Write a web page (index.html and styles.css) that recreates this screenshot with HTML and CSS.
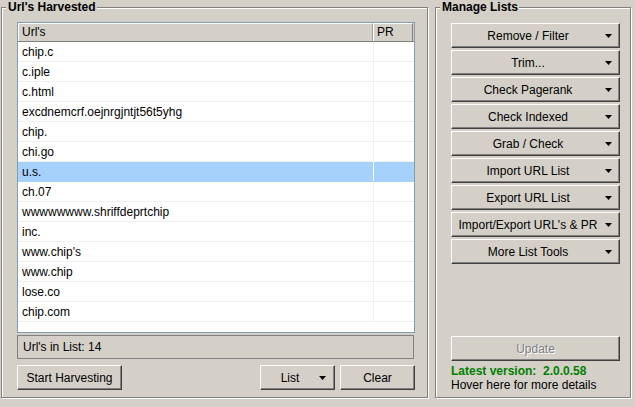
FILE: index.html
```html
<!DOCTYPE html>
<html>
<head>
<meta charset="utf-8">
<title>URL Harvester</title>
<link rel="stylesheet" href="styles.css">
</head>
<body>
<div class="window">
  <section class="group group-harvest">
    <h2 class="group-title">Url's Harvested</h2>
    <div class="url-list">
      <div class="list-head">
        <div class="hcell col-url">Url's</div>
        <div class="hcell col-pr">PR</div>
      </div>
      <div class="row"><div class="cell col-url">chip.c</div><div class="cell col-pr"></div></div>
      <div class="row"><div class="cell col-url">c.iple</div><div class="cell col-pr"></div></div>
      <div class="row"><div class="cell col-url">c.html</div><div class="cell col-pr"></div></div>
      <div class="row"><div class="cell col-url">excdnemcrf.oejnrgjntjt56t5yhg</div><div class="cell col-pr"></div></div>
      <div class="row"><div class="cell col-url">chip.</div><div class="cell col-pr"></div></div>
      <div class="row"><div class="cell col-url">chi.go</div><div class="cell col-pr"></div></div>
      <div class="row selected"><div class="cell col-url">u.s.</div><div class="cell col-pr"></div></div>
      <div class="row"><div class="cell col-url">ch.07</div><div class="cell col-pr"></div></div>
      <div class="row"><div class="cell col-url">wwwwwwww.shriffdeprtchip</div><div class="cell col-pr"></div></div>
      <div class="row"><div class="cell col-url">inc.</div><div class="cell col-pr"></div></div>
      <div class="row"><div class="cell col-url">www.chip's</div><div class="cell col-pr"></div></div>
      <div class="row"><div class="cell col-url">www.chip</div><div class="cell col-pr"></div></div>
      <div class="row"><div class="cell col-url">lose.co</div><div class="cell col-pr"></div></div>
      <div class="row"><div class="cell col-url">chip.com</div><div class="cell col-pr"></div></div>
    </div>
    <div class="status-bar">Url's in List: 14</div>
    <div class="toolbar">
      <button class="btn btn-start">Start Harvesting</button>
      <div class="toolbar-spacer"></div>
      <button class="btn btn-list"><span class="btn-label">List</span><svg class="caret" width="7" height="4" viewBox="0 0 7 4"><polygon points="0,0 7,0 3.5,4" fill="#000"/></svg></button>
      <button class="btn btn-clear">Clear</button>
    </div>
  </section>

  <section class="group group-manage">
    <h2 class="group-title">Manage Lists</h2>
    <div class="menu-buttons">
      <button class="btn btn-menu"><span class="btn-label">Remove / Filter</span><svg class="caret" width="7" height="4" viewBox="0 0 7 4"><polygon points="0,0 7,0 3.5,4" fill="#000"/></svg></button>
      <button class="btn btn-menu"><span class="btn-label">Trim...</span><svg class="caret" width="7" height="4" viewBox="0 0 7 4"><polygon points="0,0 7,0 3.5,4" fill="#000"/></svg></button>
      <button class="btn btn-menu"><span class="btn-label">Check Pagerank</span><svg class="caret" width="7" height="4" viewBox="0 0 7 4"><polygon points="0,0 7,0 3.5,4" fill="#000"/></svg></button>
      <button class="btn btn-menu"><span class="btn-label">Check Indexed</span><svg class="caret" width="7" height="4" viewBox="0 0 7 4"><polygon points="0,0 7,0 3.5,4" fill="#000"/></svg></button>
      <button class="btn btn-menu"><span class="btn-label">Grab / Check</span><svg class="caret" width="7" height="4" viewBox="0 0 7 4"><polygon points="0,0 7,0 3.5,4" fill="#000"/></svg></button>
      <button class="btn btn-menu"><span class="btn-label">Import URL List</span><svg class="caret" width="7" height="4" viewBox="0 0 7 4"><polygon points="0,0 7,0 3.5,4" fill="#000"/></svg></button>
      <button class="btn btn-menu"><span class="btn-label">Export URL List</span><svg class="caret" width="7" height="4" viewBox="0 0 7 4"><polygon points="0,0 7,0 3.5,4" fill="#000"/></svg></button>
      <button class="btn btn-menu"><span class="btn-label">Import/Export URL's &amp; PR</span><svg class="caret" width="7" height="4" viewBox="0 0 7 4"><polygon points="0,0 7,0 3.5,4" fill="#000"/></svg></button>
      <button class="btn btn-menu"><span class="btn-label">More List Tools</span><svg class="caret" width="7" height="4" viewBox="0 0 7 4"><polygon points="0,0 7,0 3.5,4" fill="#000"/></svg></button>
    </div>
    <div class="update-area">
      <button class="btn btn-update" disabled>Update</button>
      <div class="version">Latest version:&nbsp; 2.0.0.58</div>
      <div class="hover-hint">Hover here for more details</div>
    </div>
  </section>
</div>
</body>
</html>
```

FILE: styles.css
```css
* {
  box-sizing: border-box;
}

html, body {
  margin: 0;
  padding: 0;
}

body {
  width: 635px;
  height: 407px;
  overflow: hidden;
  background: #d4d0c8;
  font-family: "Liberation Sans", Arial, sans-serif;
  font-size: 12px;
  color: #000;
}

.window {
  display: flex;
  align-items: flex-start;
  padding: 7px 0 0 1px;
}

/* etched group boxes */
.group {
  position: relative;
  height: 391px;
  border: 1px solid #808080;
  box-shadow: inset 1px 1px 0 #fff, 1px 1px 0 #fff;
  display: flex;
  flex-direction: column;
}

.group-title {
  position: absolute;
  top: -8px;
  left: 4px;
  margin: 0;
  padding: 0 1px 0 2px;
  background: #d4d0c8;
  font-size: 12px;
  font-weight: bold;
  line-height: 14px;
}

.group-harvest {
  width: 427px;
  padding: 14px 0 0 15px;
}

.group-manage {
  width: 196px;
  margin-left: 7px;
  padding: 15px 0 0 15px;
}

/* url list */
.url-list {
  width: 398px;
  height: 311px;
  border: 1px solid #7f9db9;
  background: #fff;
  overflow: hidden;
}

.list-head {
  display: flex;
  height: 19px;
  background: #d4d0c8;
  border-bottom: 1px solid #808080;
}

.hcell {
  height: 18px;
  line-height: 17px;
  padding-left: 3px;
  border-top: 1px solid #fff;
  border-left: 1px solid #fff;
  border-right: 1px solid #a0a0a0;
}

.list-head .col-url {
  width: 355px;
}

.list-head .col-pr {
  width: 40px;
  border-right-color: #808080;
}

.row {
  display: flex;
  height: 20px;
  border-bottom: 1px solid #f0f0f0;
}

.cell {
  height: 19px;
  line-height: 21px;
  white-space: nowrap;
  overflow: hidden;
}

.row .col-url {
  width: 355px;
  padding-left: 4px;
}

.row .col-pr {
  width: 41px;
  border-left: 1px solid #f0f0f0;
}

.row.selected {
  background: #a6d1fa;
  border-bottom-color: #a6d1fa;
}

.row.selected .col-pr {
  border-left-color: #fff;
}

/* status + toolbar */
.status-bar {
  width: 397px;
  height: 24px;
  margin-top: 2px;
  border: 1px solid #808080;
  padding-left: 5px;
  line-height: 22px;
}

.toolbar {
  display: flex;
  width: 398px;
  margin-top: 6px;
}

.toolbar-spacer {
  flex: 1;
}

/* classic raised buttons */
.btn {
  display: flex;
  align-items: center;
  justify-content: center;
  height: 25px;
  margin: 0;
  padding: 0;
  background: #d4d0c8;
  border: 1px solid;
  border-color: #fff #404040 #404040 #fff;
  box-shadow: inset -1px -1px 0 #808080;
  font-family: "Liberation Sans", Arial, sans-serif;
  font-size: 12px;
  color: #000;
  white-space: nowrap;
}

.btn-start {
  width: 105px;
}

.btn-list {
  width: 75px;
  padding: 0 8px 0 0;
}

.btn-clear {
  width: 75px;
  margin-left: 5px;
}

.btn-label {
  flex: 1;
  text-align: center;
}

.caret {
  flex: none;
  display: block;
}

/* manage lists */
.menu-buttons {
  display: flex;
  flex-direction: column;
  gap: 2px;
}

.btn-menu {
  width: 169px;
  padding: 0 7px 0 2px;
}

.btn-menu .caret {
  margin-left: 3px;
}

.update-area {
  margin-top: auto;
  padding-bottom: 5px;
}

.btn-update {
  width: 169px;
  color: #808080;
  text-shadow: 1px 1px 0 #fff;
}

.version {
  margin-top: 3px;
  line-height: 14px;
  font-weight: bold;
  color: #008000;
}

.hover-hint {
  line-height: 14px;
}
```
